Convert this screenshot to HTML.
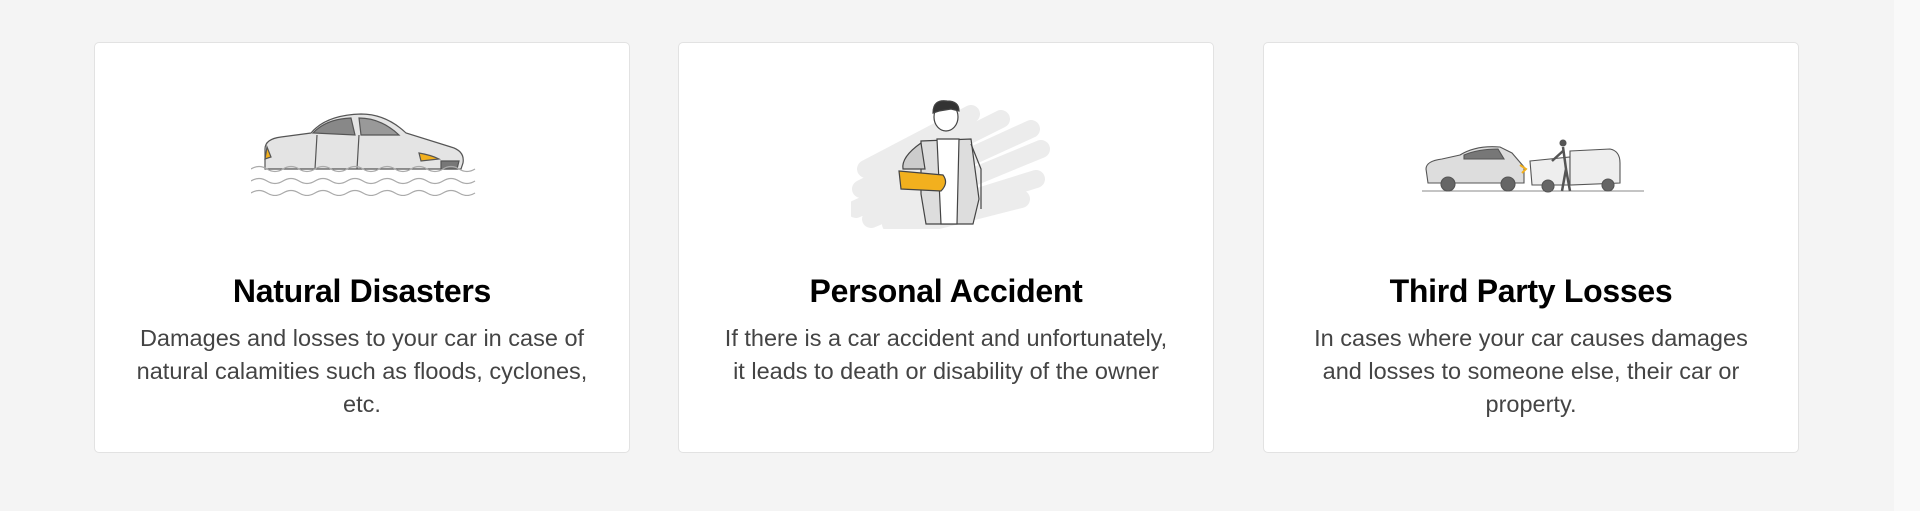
<!DOCTYPE html>
<html><head><meta charset="utf-8"><style>
html,body{margin:0;padding:0}
body{width:1920px;height:511px;background:#f4f4f4;position:relative;overflow:hidden;font-family:"Liberation Sans",sans-serif}
.sb{position:absolute;right:0;top:0;width:26px;height:511px;background:#f9f9f9}
.card{position:absolute;top:42px;width:536px;height:411px;background:#fff;border:1px solid #e2e2e2;border-radius:5px;box-sizing:border-box}
.card h3{position:absolute;left:0;right:0;top:230px;margin:0;text-align:center;font-size:32px;font-weight:bold;color:#000;letter-spacing:-0.3px}
.card p{position:absolute;left:36px;right:36px;top:279px;margin:0;text-align:center;font-size:23.5px;line-height:33px;color:#444}
svg{position:absolute}
</style></head><body>
<div class="sb"></div>
<div class="card" style="left:94px">
<svg style="left:156px;top:68px" width="226" height="85" viewBox="0 0 226 85" fill="none" stroke="#555" stroke-width="1.2">
<path d="M14 38 Q14 28 30 26 L60 22 Q75 4 110 3 Q135 3 155 22 L200 36 Q214 40 212 52 L210 58 L14 58 Z" fill="#e4e4e4"/>
<path d="M62 22 Q75 8 100 7 L104 24 Z" fill="#888"/>
<path d="M108 7 Q130 7 148 24 L110 24 Z" fill="#999"/>
<path d="M66 24 L64 58 M108 24 L106 58"/>
<path d="M168 42 Q180 44 188 48 L170 50 Z" fill="#f2b01e"/>
<path d="M16 36 L20 46 L14 48 Z" fill="#f2b01e"/>
<path d="M190 50 L208 50 L206 58 L190 58 Z" fill="#777"/>
<g stroke="#aaa"><path d="M0 58 q8 -5 16 0 t16 0 t16 0 t16 0 t16 0 t16 0 t16 0 t16 0 t16 0 t16 0 t16 0 t16 0 t16 0 t16 0"/>
<path d="M0 70 q8 -5 16 0 t16 0 t16 0 t16 0 t16 0 t16 0 t16 0 t16 0 t16 0 t16 0 t16 0 t16 0 t16 0 t16 0"/>
<path d="M0 82 q8 -5 16 0 t16 0 t16 0 t16 0 t16 0 t16 0 t16 0 t16 0 t16 0 t16 0 t16 0 t16 0 t16 0 t16 0"/></g>
</svg>
<h3>Natural Disasters</h3>
<p>Damages and losses to your car in case of natural calamities such as floods, cyclones, etc.</p>
</div>
<div class="card" style="left:678px">
<svg style="left:172px;top:56px" width="200" height="130" viewBox="0 0 200 130" fill="none" stroke="#444" stroke-width="1.2">
<path d="M10 90 L150 20 M5 110 L180 30 M20 120 L190 50 M40 125 L185 80 M60 128 L170 100 M15 70 L120 15" stroke="#ececec" stroke-width="18" stroke-linecap="round"/>
<ellipse cx="95" cy="18" rx="12" ry="14" fill="#fff"/>
<path d="M82 14 Q82 0 96 2 Q108 2 108 12 L100 10 L88 12 Z" fill="#333"/>
<path d="M70 42 L120 40 L128 100 L122 125 L75 125 L70 95 Z" fill="#ddd"/>
<path d="M86 40 L108 40 L106 125 L90 125 Z" fill="#fff"/>
<path d="M52 70 Q50 58 70 44 L74 70 Z" fill="#ccc"/>
<path d="M48 72 L92 76 Q98 84 90 92 L50 90 Z" fill="#f2b01e"/>
<path d="M120 45 L130 70 L130 110"/>
</svg>
<h3>Personal Accident</h3>
<p style="left:10px;right:10px">If there is a car accident and unfortunately,<br>it leads to death or disability of the owner</p>
</div>
<div class="card" style="left:1263px">
<svg style="left:156px;top:96px" width="226" height="56" viewBox="0 0 226 56" fill="none" stroke="#555" stroke-width="1.1">
<path d="M2 52 L224 52" stroke="#888"/>
<path d="M6 30 Q6 22 22 20 L40 16 Q56 6 80 8 L92 14 L104 28 L104 44 L8 44 Z" fill="#ddd"/>
<path d="M44 16 Q58 10 78 10 L84 20 L44 20 Z" fill="#777"/>
<circle cx="28" cy="45" r="7" fill="#666"/><circle cx="88" cy="45" r="7" fill="#666"/>
<path d="M110 22 L150 18 L150 46 L112 46 Z" fill="#eee"/>
<path d="M150 12 L190 10 Q200 12 200 24 L200 44 L150 46 Z" fill="#eee"/>
<circle cx="128" cy="47" r="6" fill="#666"/><circle cx="188" cy="46" r="6" fill="#666"/>
<path d="M100 26 L106 30 L102 34" stroke="#f2b01e" stroke-width="2"/>
<circle cx="143" cy="4" r="3" fill="#555"/>
<path d="M143 8 L146 30 L142 52 M146 30 L150 52 M143 12 L132 22" stroke="#555" stroke-width="2.5"/>
</svg>
<h3>Third Party Losses</h3>
<p>In cases where your car causes damages and losses to someone else, their car or property.</p>
</div>
</body></html>
